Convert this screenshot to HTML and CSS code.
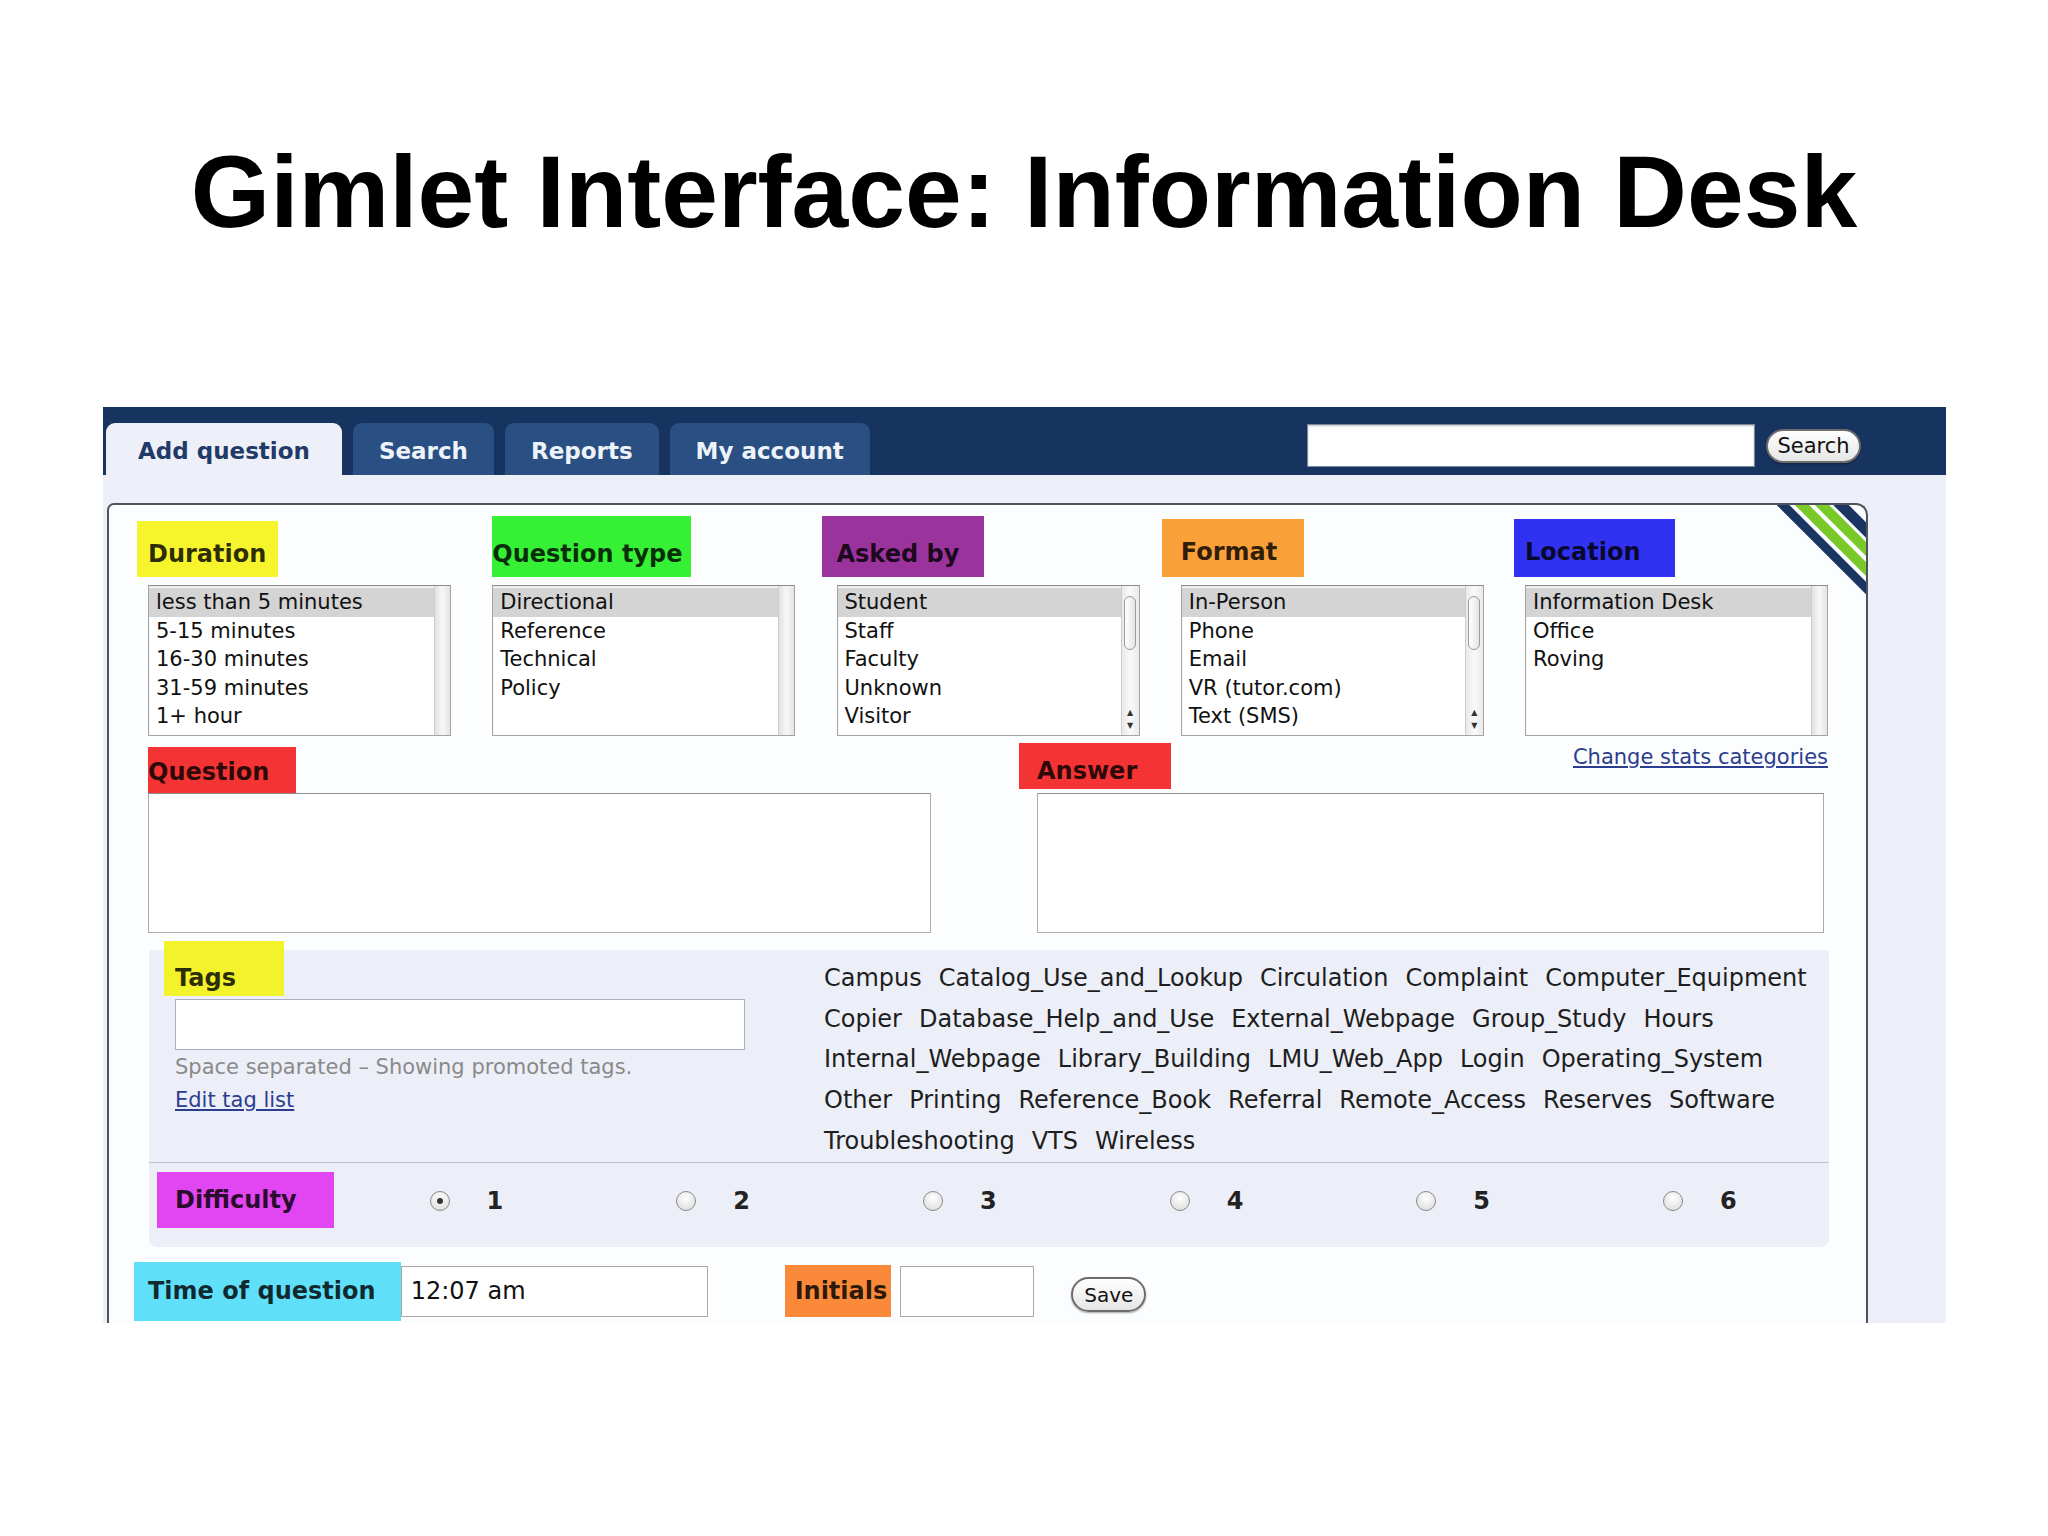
FILE: index.html
```html
<!DOCTYPE html>
<html>
<head>
<meta charset="utf-8">
<title>Gimlet Interface: Information Desk</title>
<link rel="stylesheet" href="styles.css">
</head>
<body>
<h1 class="title">Gimlet Interface: Information Desk</h1>
<div class="shot">
  <div class="nav">
    <div class="tabs">
      <div class="tab active">Add question</div>
      <div class="tab">Search</div>
      <div class="tab">Reports</div>
      <div class="tab">My account</div>
    </div>
    <div class="nav-search">
      <div class="nav-input"></div>
      <div class="btn nav-btn">Search</div>
    </div>
  </div>
  <div class="content">
    <div class="panel">
      <svg class="corner" viewBox="0 0 92 92" width="92" height="92">
        <line x1="-1" y1="-10" x2="111" y2="102" stroke="#1b3562" stroke-width="9"/>
        <line x1="18" y1="-10" x2="130" y2="102" stroke="#79c928" stroke-width="10"/>
        <line x1="38" y1="-10" x2="150" y2="102" stroke="#79c928" stroke-width="10"/>
        <line x1="57" y1="-10" x2="169" y2="102" stroke="#1b3562" stroke-width="11"/>
      </svg>

      <div class="cats">
        <div class="cat">
          <div class="cat-head"><span class="lbl lbl-duration">Duration</span></div>
          <div class="list">
            <div class="opts">
              <div class="opt sel">less than 5 minutes</div>
              <div class="opt">5-15 minutes</div>
              <div class="opt">16-30 minutes</div>
              <div class="opt">31-59 minutes</div>
              <div class="opt">1+ hour</div>
            </div>
            <div class="sb"></div>
          </div>
        </div>
        <div class="cat">
          <div class="cat-head"><span class="lbl lbl-qtype">Question type</span></div>
          <div class="list">
            <div class="opts">
              <div class="opt sel">Directional</div>
              <div class="opt">Reference</div>
              <div class="opt">Technical</div>
              <div class="opt">Policy</div>
            </div>
            <div class="sb"></div>
          </div>
        </div>
        <div class="cat">
          <div class="cat-head"><span class="lbl lbl-asked">Asked by</span></div>
          <div class="list">
            <div class="opts">
              <div class="opt sel">Student</div>
              <div class="opt">Staff</div>
              <div class="opt">Faculty</div>
              <div class="opt">Unknown</div>
              <div class="opt">Visitor</div>
            </div>
            <div class="sb sb-scroll">
              <div class="thumb"></div>
              <div class="arrows">▲<br>▼</div>
            </div>
          </div>
        </div>
        <div class="cat">
          <div class="cat-head"><span class="lbl lbl-format">Format</span></div>
          <div class="list">
            <div class="opts">
              <div class="opt sel">In-Person</div>
              <div class="opt">Phone</div>
              <div class="opt">Email</div>
              <div class="opt">VR (tutor.com)</div>
              <div class="opt">Text (SMS)</div>
            </div>
            <div class="sb sb-scroll">
              <div class="thumb"></div>
              <div class="arrows">▲<br>▼</div>
            </div>
          </div>
        </div>
        <div class="cat">
          <div class="cat-head"><span class="lbl lbl-location">Location</span></div>
          <div class="list">
            <div class="opts">
              <div class="opt sel">Information Desk</div>
              <div class="opt">Office</div>
              <div class="opt">Roving</div>
            </div>
            <div class="sb"></div>
          </div>
        </div>
      </div>

      <div class="qa">
        <div class="qa-col">
          <div class="qa-head"><span class="lbl lbl-q">Question</span></div>
          <div class="ta"></div>
        </div>
        <div class="qa-col">
          <div class="qa-head">
            <span class="lbl lbl-a">Answer</span>
            <a class="link link-stats">Change stats categories</a>
          </div>
          <div class="ta"></div>
        </div>
      </div>

      <div class="tagbox">
        <div class="tags-sec">
          <div class="tags-left">
            <span class="lbl lbl-tags">Tags</span>
            <div class="tag-input"></div>
            <div class="hint">Space separated – Showing promoted tags.</div>
            <a class="link edit-link">Edit tag list</a>
          </div>
          <div class="cloud">
            <div class="cloud-row"><span>Campus</span><span>Catalog_Use_and_Lookup</span><span>Circulation</span><span>Complaint</span><span>Computer_Equipment</span></div>
            <div class="cloud-row"><span>Copier</span><span>Database_Help_and_Use</span><span>External_Webpage</span><span>Group_Study</span><span>Hours</span></div>
            <div class="cloud-row"><span>Internal_Webpage</span><span>Library_Building</span><span>LMU_Web_App</span><span>Login</span><span>Operating_System</span></div>
            <div class="cloud-row"><span>Other</span><span>Printing</span><span>Reference_Book</span><span>Referral</span><span>Remote_Access</span><span>Reserves</span><span>Software</span></div>
            <div class="cloud-row"><span>Troubleshooting</span><span>VTS</span><span>Wireless</span></div>
          </div>
        </div>
        <div class="diff">
          <span class="lbl lbl-diff">Difficulty</span>
          <div class="radios">
            <div class="ropt"><span class="radio"><span class="dot"></span></span><span class="num">1</span></div>
            <div class="ropt"><span class="radio"></span><span class="num">2</span></div>
            <div class="ropt"><span class="radio"></span><span class="num">3</span></div>
            <div class="ropt"><span class="radio"></span><span class="num">4</span></div>
            <div class="ropt"><span class="radio"></span><span class="num">5</span></div>
            <div class="ropt"><span class="radio"></span><span class="num">6</span></div>
          </div>
        </div>
      </div>

      <div class="bottom">
        <span class="lbl lbl-time">Time of question</span>
        <div class="time-input">12:07 am</div>
        <span class="lbl lbl-init">Initials</span>
        <div class="init-input"></div>
        <div class="btn save-btn">Save</div>
      </div>
    </div>
  </div>
</div>
</body>
</html>
```

FILE: styles.css
```css
body {
  margin: 0;
  background: #ffffff;
  font-family: "DejaVu Sans", Verdana, sans-serif;
}

.title {
  margin: 0;
  padding-top: 141px;
  font-family: "Liberation Sans", Arial, sans-serif;
  font-weight: bold;
  font-size: 102px;
  line-height: 102px;
  text-align: center;
  color: #000;
}

.shot {
  margin: 164px 0 0 103px;
  width: 1843px;
  height: 916px;
  overflow: hidden;
  background: #eef0f9;
}

/* ---------- nav ---------- */
.nav {
  height: 68px;
  background: #17335f;
  display: flex;
  align-items: flex-start;
  padding-left: 3px;
}
.tabs {
  display: flex;
  gap: 11px;
  align-self: flex-end;
}
.tab {
  height: 52px;
  line-height: 56px;
  padding: 0 26px;
  background: #2a4f82;
  color: #eef3fa;
  font-weight: bold;
  font-size: 23px;
  border-radius: 9px 9px 0 0;
}
.tab.active {
  background: #eef0f9;
  color: #223a66;
  padding: 0 32px;
}
.nav-search {
  margin-left: auto;
  margin-right: 85px;
  margin-top: 17px;
  display: flex;
  align-items: center;
  gap: 11px;
}
.nav-input {
  width: 448px;
  height: 43px;
  box-sizing: border-box;
  background: #fff;
  border: 1px solid #7d8aa0;
  box-shadow: inset 0 1px 2px rgba(0, 0, 0, 0.25);
}
.btn {
  box-sizing: border-box;
  display: flex;
  align-items: center;
  justify-content: center;
  border: 2px solid #6c6c6c;
  border-radius: 18px;
  background: linear-gradient(#ffffff, #e6e6e6);
  color: #111;
  box-shadow: 0 1px 2px rgba(0, 0, 0, 0.35);
}
.nav-btn {
  width: 95px;
  height: 34px;
  font-size: 21px;
}

/* ---------- panel ---------- */
.content {
  padding: 28px 0 0 4px;
}
.panel {
  position: relative;
  overflow: hidden;
  box-sizing: border-box;
  width: 1761px;
  height: 900px;
  border: 2px solid #50535c;
  border-bottom: none;
  border-radius: 7px 12px 0 0;
  background: #fcfdfe;
  padding-left: 39px;
}
.corner {
  position: absolute;
  top: 0;
  right: 0;
}

/* labels */
.lbl {
  display: inline-block;
  font-weight: bold;
  font-size: 24px;
  line-height: 30px;
  padding: 18px 0 8px;
  color: rgba(0, 0, 0, 0.82);
  white-space: nowrap;
}
.lbl-duration { background: #f6f42a; margin-left: -11px; padding-left: 11px; padding-right: 12px; }
.lbl-qtype { background: #36f036; padding: 23px 8px 8px 0; }
.lbl-asked { background: #9b339d; margin-left: -15px; padding: 23px 25px 8px 15px; }
.lbl-format { background: #f9a038; margin-left: -19px; padding: 18px 27px 10px 19px; }
.lbl-location { background: #3131f2; margin-left: -11px; padding: 18px 35px 10px 11px; }
.lbl-q { background: #f43434; padding: 10px 27px 6px 0; }
.lbl-a { background: #f43434; margin-left: -18px; margin-bottom: 4px; padding: 13px 34px 3px 18px; }
.lbl-tags { background: #f3f32c; margin-top: -9px; padding: 22px 48px 3px 11px; }
.lbl-diff { background: #e245f2; margin-top: 9px; padding: 13px 37px 13px 18px; }
.lbl-time { background: #5fdff8; padding: 14px 25px 15px 14px; }
.lbl-init { background: #fa8a3a; margin-left: 77px; padding: 11px 4px 11px 10px; }

/* category lists */
.cats {
  display: grid;
  grid-template-columns: repeat(5, 303px);
  column-gap: 41.25px;
}
.cat-head {
  height: 72px;
  display: flex;
  align-items: flex-end;
}
.list {
  margin-top: 8px;
  height: 151px;
  box-sizing: border-box;
  border: 1px solid #a4a4a4;
  border-top-color: #8c8c8c;
  display: flex;
  background: #fff;
  box-shadow: inset 0 1px 2px rgba(0, 0, 0, 0.12);
}
.opts {
  flex: 1;
  padding-top: 2px;
}
.opt {
  font-size: 21px;
  line-height: 28.5px;
  padding-left: 7px;
  color: #111;
  white-space: nowrap;
}
.opt.sel {
  background: #d4d4d4;
}
.sb {
  width: 15px;
  border-left: 1px solid #cdcdcd;
  background: linear-gradient(to right, #e2e2e2, #f7f7f7 50%, #e4e4e4);
}
.sb-scroll {
  width: 17px;
  display: flex;
  flex-direction: column;
  background: linear-gradient(to right, #e9e9e9, #fafafa 50%, #e9e9e9);
}
.thumb {
  margin: 10px auto 0;
  width: 12px;
  height: 54px;
  box-sizing: border-box;
  border: 1px solid #9b9b9b;
  border-radius: 6px;
  background: linear-gradient(to right, #ffffff, #e4e4e4);
}
.arrows {
  margin-top: auto;
  padding-bottom: 3px;
  font-size: 8px;
  line-height: 13px;
  text-align: center;
  color: #333;
}

/* question / answer */
.qa {
  display: grid;
  grid-template-columns: 783px 787px;
  column-gap: 106px;
  margin-top: 8px;
}
.qa-head {
  height: 49px;
  display: flex;
  align-items: flex-end;
  justify-content: space-between;
}
.link {
  color: #2b3d8e;
  text-decoration: underline;
  font-size: 21px;
  line-height: 26px;
}
.link-stats {
  align-self: flex-start;
  margin-top: 1px;
  margin-right: -4px;
  line-height: 24px;
}
.ta {
  height: 140px;
  box-sizing: border-box;
  border: 1px solid #ababab;
  border-top-color: #8f8f8f;
  background: #fff;
}

/* tags */
.tagbox {
  margin: 17px 0 0 1px;
  width: 1680px;
  background: #eceff8;
  border-radius: 4px 4px 8px 8px;
}
.tags-sec {
  display: flex;
}
.tags-left {
  width: 675px;
  box-sizing: border-box;
  padding-left: 15px;
  display: flex;
  flex-direction: column;
  align-items: flex-start;
}
.tag-input {
  margin: 3px 0 0 11px;
  width: 570px;
  height: 51px;
  box-sizing: border-box;
  border: 1px solid #a9b0c0;
  background: #fff;
}
.hint {
  margin: 4px 0 0 11px;
  font-size: 21px;
  line-height: 26px;
  color: #8a8a8a;
}
.edit-link {
  margin: 7px 0 0 11px;
}
.cloud {
  padding-top: 8px;
}
.cloud-row {
  display: flex;
  column-gap: 17px;
  font-size: 24px;
  line-height: 40.7px;
  color: #1e1e1e;
  white-space: nowrap;
}

/* difficulty */
.diff {
  border-top: 1px solid #bdc4d4;
  height: 84px;
  display: flex;
  align-items: flex-start;
  padding-left: 8px;
}
.radios {
  display: flex;
  align-self: center;
  margin: 0 0 8px 96px;
}
.ropt {
  width: 246.7px;
  display: flex;
  align-items: center;
}
.radio {
  width: 20px;
  height: 20px;
  box-sizing: border-box;
  border-radius: 50%;
  border: 1px solid #8a8a8a;
  background: radial-gradient(circle at 50% 35%, #ffffff, #d8d8d8);
  display: flex;
  align-items: center;
  justify-content: center;
}
.dot {
  width: 6px;
  height: 6px;
  border-radius: 50%;
  background: #333;
}
.num {
  margin-left: 37px;
  font-weight: bold;
  font-size: 24px;
  color: #222;
}

/* bottom row */
.bottom {
  display: flex;
  align-items: center;
  margin: 15px 0 0 -14px;
}
.time-input {
  width: 307px;
  height: 51px;
  box-sizing: border-box;
  border: 1px solid #a9a9a9;
  background: #fff;
  font-size: 24px;
  line-height: 49px;
  padding-left: 9px;
  color: #111;
}
.init-input {
  margin-left: 9px;
  width: 134px;
  height: 51px;
  box-sizing: border-box;
  border: 1px solid #a9a9a9;
  background: #fff;
}
.save-btn {
  margin: 7px 0 0 37px;
  width: 75px;
  height: 35px;
  font-size: 20px;
}
```
